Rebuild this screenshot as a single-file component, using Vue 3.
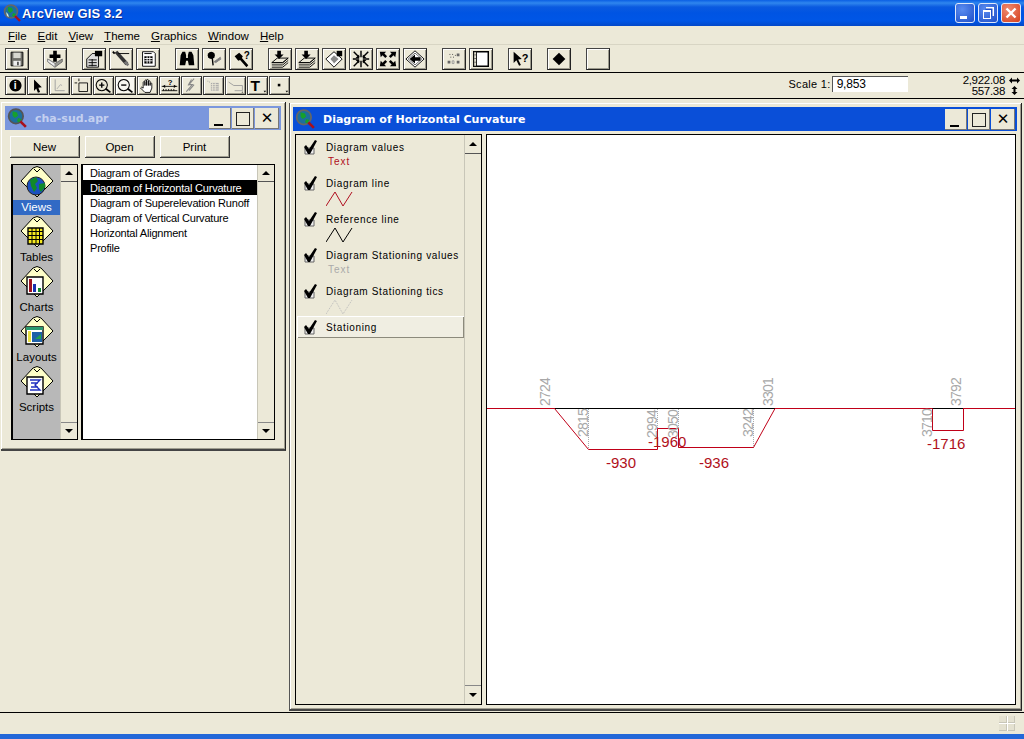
<template>
  <div class="app">
    <!-- main title bar -->
    <header class="titlebar">
      <svg class="logo" viewBox="0 0 18 18">
        <circle cx="8" cy="7.5" r="6.5" fill="#1d6f9c" stroke="#666" stroke-width="1.6" />
        <path d="M5 3l4 1 1 3-3 2-2-2zM10 9l3 1-2 3-2-1z" fill="#16a02c" />
        <path d="M3 8l2 2 1 3-2-1z" fill="#d8e8d8" />
        <path d="M12 12l5 5" stroke="#a8101c" stroke-width="2.4" />
      </svg>
      <span class="app-title">ArcView GIS 3.2</span>
      <div class="xp-buttons">
        <span class="xp-btn"><i class="xp-min"></i></span>
        <span class="xp-btn"><i class="xp-restore"></i></span>
        <span class="xp-btn xp-close">
          <svg viewBox="0 0 20 20"><path d="M5.500 5.500l9 9M14.500 5.500l-9 9" stroke="#fff" stroke-width="2.400" /></svg>
        </span>
      </div>
    </header>

    <!-- menu -->
    <nav class="menubar">
      <span v-for="m in menus" :key="m.rest" class="menu-item"><u>{{ m.key }}</u>{{ m.rest }}</span>
    </nav>

    <!-- toolbars -->
    <div class="toolbar toolbar-main">
      <button
        v-for="t in mainTools"
        :key="t.id"
        class="tool"
        :class="[t.id, { sep: t.sep }]"
      >
        <svg viewBox="0 0 24 22">
          <template v-for="(s, i) in t.shapes" :key="i">
            <text v-if="s.t" :x="s.x" :y="s.y" :font-size="s.size" class="icon-text">{{ s.t }}</text>
            <path v-else :d="s.d" :fill="s.fill" :stroke="s.stroke" :stroke-width="s.sw" />
          </template>
        </svg>
      </button>
    </div>

    <div class="toolbar toolbar-small">
      <button v-for="t in smallTools" :key="t.id" class="tool tool-small" :class="t.id">
        <svg viewBox="0 0 22 18">
          <template v-for="(s, i) in t.shapes" :key="i">
            <text
              v-if="s.t"
              :x="s.x"
              :y="s.y"
              :font-size="s.size"
              :font-family="s.serif ? 'Liberation Serif, serif' : null"
              class="icon-text"
            >{{ s.t }}</text>
            <path v-else :d="s.d" :fill="s.fill" :stroke="s.stroke" :stroke-width="s.sw" />
          </template>
        </svg>
      </button>
      <div class="scale">
        <span>Scale 1:</span>
        <span class="scale-input">9,853</span>
      </div>
      <div class="coords">
        <span>2,922.08</span>
        <svg class="coord-arrow" viewBox="0 0 11 9"><path d="M0 4.500l3-3v2h5v-2l3 3-3 3v-2H3v2z" /></svg>
        <span>557.38</span>
        <svg class="coord-arrow" viewBox="0 0 11 9"><path d="M5.500 0l3 3h-2v3h2l-3 3-3-3h2V3h-2z" /></svg>
      </div>
    </div>

    <main class="desktop">
      <!-- project window -->
      <section class="window project">
        <div class="win-title inactive">
          <svg class="logo win-logo" viewBox="0 0 18 18">
            <circle cx="8" cy="7.5" r="6.5" fill="#1d6f9c" stroke="#555" stroke-width="1.6" />
            <path d="M5 3l4 1 1 3-3 2-2-2zM10 9l3 1-2 3-2-1z" fill="#16a02c" />
            <path d="M12 12l5 5" stroke="#a8101c" stroke-width="2.400" />
          </svg>
          <span class="win-name">cha-sud.apr</span>
          <div class="win-buttons">
            <span class="win-btn"><i class="w-min"></i></span>
            <span class="win-btn"><i class="w-max"></i></span>
            <span class="win-btn w-close">✕</span>
          </div>
        </div>

        <div class="project-actions">
          <button class="action">New</button>
          <button class="action">Open</button>
          <button class="action">Print</button>
        </div>

        <div class="project-body">
          <div class="panel types">
            <div class="type-list">
              <div v-for="d in docTypes" :key="d.name" class="type-item">
                <svg class="type-icon" viewBox="0 0 34 34">
                  <path d="M1 16L13 3q4-3 8 0l12 13-16 16z" fill="#ffffc8" stroke="#000" />
                  <path d="M14 4l3 3 3-3" fill="none" stroke="#000" />
                  <template v-if="d.name === 'Views'">
                    <circle cx="16" cy="21" r="9" fill="#1a50c0" stroke="#222" />
                    <path d="M10 15l6-3 2 4-3 3 2 4-3 4-3-6zM19 19l6-1v4l-4 5-2-3z" fill="#108a2a" />
                  </template>
                  <template v-else-if="d.name === 'Tables'">
                    <path d="M8 13h15v16H8z" fill="#f5e820" stroke="#000" stroke-width="1.400" />
                    <path d="M8 16.500h15M8 20.500h15M8 24.500h15M12 13v16M16 13v16M19.500 13v16" stroke="#000" stroke-width="1" />
                  </template>
                  <template v-else-if="d.name === 'Charts'">
                    <path d="M7 12h16v17H7z" fill="#fff" stroke="#000" stroke-width="1.400" />
                    <path d="M9 14h3v13H9z" fill="#a01020" />
                    <path d="M13 19h3v8h-3z" fill="#1a30b0" />
                    <path d="M18 23h3v4h-3z" fill="#128a30" />
                  </template>
                  <template v-else-if="d.name === 'Layouts'">
                    <path d="M6 12h17v17H6z" fill="#fff" stroke="#000" stroke-width="1.400" />
                    <path d="M6 12h17v3H6z" fill="#2a9a70" />
                    <path d="M8 16h3v11H8z" fill="#e8e040" />
                    <path d="M12 17h10v10H12z" fill="#1c60a8" />
                    <path d="M15 24l6-5v5z" fill="#20a050" />
                  </template>
                  <template v-else>
                    <path d="M7 12h16v17H7z" fill="#fff" stroke="#000" stroke-width="1.400" />
                    <path d="M10 15h10l-5 5 5 5H10M11 18h7M11 22h7" fill="none" stroke="#2030c0" stroke-width="1.400" />
                  </template>
                </svg>
                <div class="type-label" :class="{ current: d.name === 'Views' }">{{ d.name }}</div>
              </div>
            </div>
            <div class="vscroll">
              <span class="sb-btn"><i class="up"></i></span>
              <span class="sb-track"></span>
              <span class="sb-btn"><i class="down"></i></span>
            </div>
          </div>

          <div class="panel docs">
            <ul class="doc-list">
              <li
                v-for="name in documents"
                :key="name"
                :class="{ selected: name === 'Diagram of Horizontal Curvature' }"
              >{{ name }}</li>
            </ul>
            <div class="vscroll">
              <span class="sb-btn"><i class="up"></i></span>
              <span class="sb-track"></span>
              <span class="sb-btn"><i class="down"></i></span>
            </div>
          </div>
        </div>
      </section>

      <!-- view window -->
      <section class="window view">
        <div class="win-title">
          <svg class="logo win-logo" viewBox="0 0 18 18">
            <circle cx="8" cy="7.500" r="6.500" fill="#1d6f9c" stroke="#666" stroke-width="1.600" />
            <path d="M5 3l4 1 1 3-3 2-2-2zM10 9l3 1-2 3-2-1z" fill="#16a02c" />
            <path d="M12 12l5 5" stroke="#a8101c" stroke-width="2.400" />
          </svg>
          <span class="win-name">Diagram of Horizontal Curvature</span>
          <div class="win-buttons">
            <span class="win-btn"><i class="w-min"></i></span>
            <span class="win-btn"><i class="w-max"></i></span>
            <span class="win-btn w-close">✕</span>
          </div>
        </div>

        <div class="view-body">
          <aside class="legend-panel">
            <div class="legend-rows">
              <div
                v-for="row in legend"
                :key="row.label"
                class="legend-row"
                :class="{ active: row.active }"
              >
                <svg class="check" viewBox="0 0 16 16">
                  <path d="M3 9h9v6H3z" fill="#eee" stroke="#666" />
                  <path d="M2 8l2-2 3 4 6-9 2 1-7 13H6z" fill="#000" />
                </svg>
                <div class="legend-text">
                  <div class="legend-label">{{ row.label }}</div>
                  <div v-if="row.sample" class="legend-sample" :style="{ color: row.color }">{{ row.sample }}</div>
                  <svg v-else-if="row.color" class="legend-line" viewBox="0 0 28 16">
                    <path
                      d="M0 15L9 1l8 14L26 1"
                      fill="none"
                      :stroke="row.color"
                      :stroke-dasharray="row.dotted ? '1 1' : null"
                    />
                  </svg>
                </div>
              </div>
            </div>
            <div class="vscroll">
              <span class="sb-btn tall"><i class="up"></i></span>
              <span class="sb-track"></span>
              <span class="sb-btn tall"><i class="down"></i></span>
            </div>
          </aside>

          <!-- diagram canvas uses the page's own pixel coordinates -->
          <div class="canvas">
            <svg class="diagram" viewBox="487 135 528 569">
              <path d="M487 408.500H1015" stroke="#c00018" fill="none" />
              <path d="M555 408.500H775M932 408.500H963" stroke="#000" fill="none" />
              <path
                d="M588.500 409V449M657.500 409V449M678.500 409V448M753.500 409V448"
                stroke="#aaa"
                stroke-dasharray="1 1"
                fill="none"
              />
              <path
                d="M554.500 408.500L588.500 449.500H657.500V428.500H678.500V447.500H753.500L775 408.500"
                stroke="#c00018"
                fill="none"
              />
              <path d="M932.500 408.500V430.500H963.500V408.500" stroke="#c00018" fill="none" />
              <text
                v-for="s in stations"
                :key="s.text"
                :x="s.x"
                :y="s.y"
                :transform="`rotate(-90 ${s.x} ${s.y})`"
                class="station"
              >{{ s.text }}</text>
              <text v-for="v in values" :key="v.text" :x="v.x" :y="v.y" class="value">{{ v.text }}</text>
            </svg>
          </div>
        </div>
      </section>
    </main>

    <footer class="statusbar">
      <span class="grip"><i></i><i></i><i></i><i></i></span>
    </footer>
    <div class="taskbar"></div>
  </div>
</template>

<script setup>
// shorthand for the icon shapes
const p = (d, fill = '#000', stroke = 'none', sw = 1) => ({ d, fill, stroke, sw })
const line = (d, stroke = '#000', sw = 1) => ({ d, fill: 'none', stroke, sw })
const txt = (t, x, y, size, serif = false) => ({ t, x, y, size, serif })

const menus = [
  { key: 'F', rest: 'ile' },
  { key: 'E', rest: 'dit' },
  { key: 'V', rest: 'iew' },
  { key: 'T', rest: 'heme' },
  { key: 'G', rest: 'raphics' },
  { key: 'W', rest: 'indow' },
  { key: 'H', rest: 'elp' },
]

const stack = [
  p('M3 15l6-5h12l-6 5z', '#ece9d8', '#000'),
  line('M3 15h12l6-5M3 17.500h12l6-5M3 20h12l6-5'),
  p('M9 2h4v4h3l-5 5-5-5h3z'),
]

const mainTools = [
  { id: 'save', shapes: [p('M5.500 3.500h13v15h-13z', '#6e6e68', '#000'), p('M8 4h8v6H8z', '#d8d8d0'), p('M8 13h8v5.500H8z', '#eee'), p('M12 14h2v4h-2z', '#555')] },
  { id: 'add', sep: true, shapes: [p('M4 11l8 5 8-5v3l-8 6-8-6z', '#9a9a94', '#666'), p('M4 11l8 5v4l-8-6z', '#eee', '#888'), p('M10 2h4v4h4v4h-4v4h-4v-4H6V6h4z')] },
  { id: 'props', sep: true, shapes: [p('M4 11l6-6h7v15H4z', '#ddd', '#000'), line('M6 12h9M6 15h9M6 18h9M10 11v8'), p('M13 2h8v6h-8z')] },
  { id: 'edit', shapes: [line('M3 3l2 2', '#000', 2), p('M5 4l3-2 12 13-3 3z', '#333'), p('M15 15l3-2 3 4-2 2z', '#777'), line('M9 5h12')] },
  { id: 'table', shapes: [p('M6 3h12l2 2v14H6z', '#fff', '#000'), p('M8 8h9v8H8z', '#000'), line('M8 10.500h9M8 13h9M11 8v8M14 8v8', '#fff'), line('M8 5h8')] },
  { id: 'find', sep: true, shapes: [p('M5 7l2-4h3l1 4v3h2V7l1-4h3l2 4 1 11h-6l-1-5h-2l-1 5H4z')] },
  { id: 'locate', shapes: [p('M9 3a4 4 0 1 1-.01 0z'), line('M10 9l1 9', '#000', 1.500), { d: 'M12 14l7-5v2l-5 4zM15 14l5-3', fill: '#777', stroke: '#888', sw: 1 }] },
  { id: 'query', shapes: [p('M5 8l5-4 4 4-1 2 7 8-2 2-7-8-2 1z'), txt('?', 15, 11, 11)] },
  { id: 'load1', sep: true, shapes: stack },
  { id: 'load2', shapes: stack },
  { id: 'legendtool', shapes: [p('M12 3l9 8-9 9-9-9z', '#fff', '#000'), p('M12 7l5 4-5 5-4-5z', '#888'), p('M15 2h6v6h-6z'), line('M9 13l2 2', '#fff')] },
  { id: 'shrink', shapes: [line('M4 3l6 6M20 3l-6 6M4 19l6-6M20 19l-6-6M12 2v7M12 20v-7M3 11h7M21 11h-7', '#000', 1.600), p('M10 10H6l4-4zM14 10h4l-4-4zM10 12H6l4 4zM14 12h4l-4 4z')] },
  { id: 'grow', shapes: [p('M3 3h7L8 5l3 3-2 2-3-3-2 2zM21 3h-7l2 2-3 3 2 2 3-3 2 2zM3 19h7l-2-2 3-3-2-2-3 3-2-2zM21 19h-7l2-2-3-3 2-2 3 3 2-2z')] },
  { id: 'back', shapes: [p('M12 2l10 9-10 9L2 11z', '#fff', '#000'), line('M12 4.500L19.500 11 12 17.500 4.500 11z', '#666'), p('M6 11l6-5v3h6v4h-6v3z')] },
  { id: 'select', sep: true, shapes: [line('M7 6h1M10 6h1M13 7h1M8 9h1M11 9h1', '#444'), p('M15 5h3v3h-3zM5 13h3v3H5zM15 13h3v3h-3z', '#666'), line('M10 13h2v3h-2z', '#999')] },
  { id: 'frame', shapes: [p('M4 3h16v16H4z', '#fff', '#000', 1.600), p('M4 3h3v16H4z', '#ece9d8', '#000'), line('M5.500 6v1M5.500 10v1M5.500 14v1')] },
  { id: 'help', sep: true, shapes: [p('M5 3l9 8-4 .5 3 6-2 1-3-6-3 3z'), txt('?', 14, 14, 12)] },
  { id: 'point', sep: true, shapes: [p('M12 4l7 7-7 7-7-7z')] },
  { id: 'blank', sep: true, shapes: [] },
]

const smallTools = [
  { id: 'info', shapes: [p('M11 2a7 7 0 1 1-.01 0z'), txt('i', 9, 13.500, 12, true)] },
  { id: 'pointer', shapes: [p('M7 2l9 9-4 .5 2 5-2.500 1-2-5-2.500 3z')] },
  { id: 'vertex', shapes: [line('M6 2v13h11', '#999'), line('M8 13l4-5 2 1', '#aaa')] },
  { id: 'rect', shapes: [line('M8 6h10v10H8zM6 6H3M8 4V1', '#000')] },
  { id: 'zoomin', shapes: [p('M9 2a6.500 6.500 0 1 1-.01 0z', 'none', '#000', 1.200), line('M6 8.500h6M9 5.500v6', '#000', 1.600), line('M14 13l5 4', '#000', 2)] },
  { id: 'zoomout', shapes: [p('M9 2a6.500 6.500 0 1 1-.01 0z', 'none', '#000', 1.200), line('M6 8.500h6', '#000', 1.600), line('M14 13l5 4', '#000', 2)] },
  { id: 'hand', shapes: [p('M6 10V5.500a1 1 0 0 1 2 0V9 3.500a1 1 0 0 1 2 0V9 3a1 1 0 0 1 2 0v6V4.500a1 1 0 0 1 2 0V9 7a1 1 0 0 1 2 0v5l-2 5H8l-5-5 1-1 2 1z', '#fff', '#000')] },
  { id: 'measure', shapes: [txt('?', 9, 8, 9), line('M2 10h18M2 15h18'), p('M3 10l3-2v4zM19 10l-3-2v4z'), line('M4 13v2M7 13v2M10 13v2M13 13v2M16 13v2')] },
  { id: 'bolt', shapes: [line('M14 1L8 8h4l-7 8M11 2L7 9M14 8l-6 7', '#888', 1.200)] },
  { id: 'hatch', shapes: [line('M4 4h1M6 5h1', '#999'), p('M8 6h9v9H8z', '#aaa'), line('M8 8h9M8 10.500h9M8 13h9M10 6v9M13 6v9', '#ece9d8')] },
  { id: 'poly', shapes: [line('M3 5l6 4h10v6h-9', '#999'), p('M19 16l1 1h-2z')] },
  { id: 'bigt', shapes: [txt('T', 3, 15, 18, true), p('M18 15h3l-1.500 2z')] },
  { id: 'dot', shapes: [p('M9 7h3v3H9z'), p('M18 15h3l-1.500 2z')] },
]

const docTypes = [
  { name: 'Views' },
  { name: 'Tables' },
  { name: 'Charts' },
  { name: 'Layouts' },
  { name: 'Scripts' },
]

const documents = [
  'Diagram of Grades',
  'Diagram of Horizontal Curvature',
  'Diagram of Superelevation Runoff',
  'Diagram of Vertical Curvature',
  'Horizontal Alignment',
  'Profile',
]

const legend = [
  { label: 'Diagram values', sample: 'Text', color: '#b01020' },
  { label: 'Diagram line', color: '#b01020' },
  { label: 'Reference line', color: '#000' },
  { label: 'Diagram Stationing values', sample: 'Text', color: '#aaa' },
  { label: 'Diagram Stationing tics', color: '#bbb', dotted: true },
  { label: 'Stationing', active: true },
]

const stations = [
  { text: '2724', x: 550, y: 406 },
  { text: '2815', x: 588, y: 437 },
  { text: '2994', x: 657, y: 438 },
  { text: '3050', x: 678, y: 438 },
  { text: '3242', x: 753, y: 437 },
  { text: '3301', x: 773, y: 406 },
  { text: '3710', x: 932, y: 437 },
  { text: '3792', x: 961, y: 406 },
]

const values = [
  { text: '-1960', x: 648, y: 447 },
  { text: '-930', x: 606, y: 468 },
  { text: '-936', x: 699, y: 468 },
  { text: '-1716', x: 927, y: 449 },
]
</script>

<style scoped>
.app {
  width: 1024px;
  height: 739px;
  display: flex;
  flex-direction: column;
  overflow: hidden;
  background: #ece9d8;
  font-family: "Liberation Sans", Arial, sans-serif;
  font-size: 11px;
  color: #000;
}

/* main title bar */
.titlebar {
  height: 26px;
  flex: none;
  display: flex;
  align-items: center;
  padding-left: 3px;
  gap: 1px;
  background: linear-gradient(#0a5fe4 0, #2f86ee 3px, #0a5ae0 7px, #0054e3 50%, #0056e6 80%, #0348c8 100%);
}
.logo {
  width: 18px;
  height: 18px;
  flex: none;
}
.win-logo {
  width: 20px;
  height: 20px;
}
.app-title {
  font: bold 13px "Liberation Sans", sans-serif;
  letter-spacing: 0.1px;
  color: #fff;
  text-shadow: 1px 1px 0 #0a2a90;
}
.xp-buttons {
  margin-left: auto;
  margin-right: 3px;
  display: flex;
  gap: 3px;
}
.xp-btn {
  width: 20px;
  height: 20px;
  box-sizing: border-box;
  border: 1px solid #dfe8fa;
  border-radius: 3px;
  background: radial-gradient(circle at 35% 30%, #5a8cf0, #1f4fc8);
  position: relative;
  display: block;
}
.xp-close {
  background: radial-gradient(circle at 35% 30%, #ee8a70, #d6401c);
}
.xp-close svg {
  position: absolute;
  inset: -1px;
}
.xp-min {
  position: absolute;
  left: 4px;
  bottom: 3px;
  width: 7px;
  height: 3px;
  background: #fff;
}
.xp-restore {
  position: absolute;
  left: 4px;
  top: 6px;
  width: 6px;
  height: 6px;
  border: 1px solid #fff;
  border-top-width: 2px;
  box-shadow: 2px -2px 0 -0.5px #1f4fc8, 3px -3px 0 0 #fff;
}

/* menu */
.menubar {
  height: 19px;
  flex: none;
  box-sizing: border-box;
  display: flex;
  align-items: center;
  gap: 11px;
  padding: 2px 0 0 8px;
  border-bottom: 1px solid #d8d5c4;
  font-size: 11.500px;
}

/* toolbars */
.toolbar {
  flex: none;
  display: flex;
  box-sizing: border-box;
  border-bottom: 1px solid #000;
  padding-left: 5px;
}
.toolbar-main {
  height: 28px;
  padding-top: 3px;
  gap: 3px;
}
.toolbar-small {
  height: 26px;
  padding-top: 3px;
  gap: 1px;
  align-items: flex-start;
}
.tool {
  width: 24px;
  height: 22px;
  padding: 0;
  box-sizing: border-box;
  background: #ece9d8;
  border: 1px solid #444;
  border-right-color: #222;
  border-bottom-color: #222;
  box-shadow: inset 1px 1px 0 #fff, inset -1px -1px 0 #9c9a8c;
  display: block;
}
.tool svg {
  width: 100%;
  height: 100%;
  display: block;
}
.tool.sep {
  margin-left: 12px;
}
.tool.save {
  margin-right: -1px;
}
.tool-small {
  width: 21px;
  height: 19px;
}
.zoomout {
  background: #f8f7f0;
}
.icon-text {
  font-family: "Liberation Sans", sans-serif;
  font-weight: bold;
}
.info .icon-text {
  fill: #fff;
}

/* scale and cursor read-out */
.scale {
  margin-left: auto;
  display: flex;
  align-items: center;
  gap: 1px;
  height: 16px;
  letter-spacing: 0.300px;
}
.scale-input {
  width: 76px;
  height: 16px;
  box-sizing: border-box;
  padding-left: 4px;
  background: #fff;
  border-top: 1px solid #555;
  border-left: 1px solid #555;
  line-height: 15px;
  letter-spacing: -0.200px;
  font-size: 12px;
}
.coords {
  margin-left: 54px;
  margin-right: 4px;
  margin-top: -1px;
  display: grid;
  grid-template-columns: auto 11px;
  column-gap: 4px;
  align-items: center;
  justify-items: end;
  line-height: 10.500px;
  font-size: 11.500px;
  letter-spacing: -0.300px;
}
.coord-arrow {
  width: 11px;
  height: 9px;
}

/* mdi area */
.desktop {
  flex: 1;
  position: relative;
}
.window {
  position: absolute;
  box-sizing: border-box;
  background: #ece9d8;
  border-right: 1px solid #222;
  border-bottom: 2px solid #444;
  box-shadow: inset 1px 1px 0 #fff, inset -1px -1px 0 #a09e90;
  padding: 4px;
  display: flex;
  flex-direction: column;
}
.project {
  left: 1px;
  top: 3px;
  width: 285px;
  height: 349px;
}
.view {
  left: 289px;
  top: 4px;
  width: 733px;
  height: 608px;
  border-left: 1px solid #555;
  padding-left: 3px;
}
.win-title {
  height: 24px;
  flex: none;
  display: flex;
  align-items: center;
  gap: 5px;
  padding-left: 2px;
  background: #0a4fd8;
  color: #fff;
}
.project .win-title {
  margin-bottom: 6px;
}
.view .win-title {
  margin-bottom: 3px;
}
.win-title.inactive {
  background: #7b97dd;
  color: #c4d0f0;
}
.win-name {
  margin-left: 3px;
  font: bold 11px "DejaVu Sans", sans-serif;
}
.win-buttons {
  margin-left: auto;
  margin-right: 2px;
  display: flex;
  gap: 1px;
}
.win-btn {
  width: 22px;
  height: 21px;
  box-sizing: border-box;
  background: #ece9d8;
  box-shadow: inset -1px -1px 0 #777;
  position: relative;
  display: block;
  color: #000;
}
.w-min {
  position: absolute;
  left: 5px;
  bottom: 3px;
  width: 9px;
  height: 2px;
  background: #000;
}
.w-max {
  position: absolute;
  left: 4px;
  top: 4px;
  width: 12px;
  height: 12px;
  border: 1px solid #222;
}
.w-close {
  width: 24px;
  text-align: center;
  font: bold 15px/21px "DejaVu Sans", sans-serif;
}

/* project window */
.project-actions {
  display: flex;
  gap: 5px;
  padding-left: 5px;
  margin-bottom: 6px;
}
.action {
  width: 70px;
  height: 22px;
  padding: 0;
  background: #ece9d8;
  border: 0;
  border-right: 1px solid #333;
  border-bottom: 1px solid #333;
  box-shadow: inset 1px 1px 0 #fff, inset -1px -1px 0 #a09e90;
  font: 11.500px "Liberation Sans", sans-serif;
  color: #000;
}
.project-body {
  display: flex;
  gap: 3px;
  height: 276px;
  padding-left: 6px;
}
.panel {
  display: flex;
  box-sizing: border-box;
  border: 1px solid #000;
  border-left-width: 2px;
  background: #fff;
}
.types {
  width: 67px;
  background: #b8b8b8;
}
.docs {
  width: 194px;
}
.type-list {
  flex: 1;
  min-width: 0;
}
.type-item {
  height: 50px;
  text-align: center;
}
.type-icon {
  width: 34px;
  height: 34px;
  margin: 0 auto 1px;
  display: block;
}
.type-label {
  height: 15px;
  line-height: 15px;
  font-size: 11.500px;
}
.type-label.current {
  background: #316ac5;
  color: #fff;
}
.doc-list {
  flex: 1;
  min-width: 0;
  margin: 0;
  padding: 0;
  list-style: none;
}
.doc-list li {
  height: 15px;
  line-height: 16px;
  padding-left: 7px;
  white-space: nowrap;
  font-size: 11px;
  letter-spacing: -0.200px;
}
.doc-list li.selected {
  background: #000;
  color: #fff;
}

/* scroll bars */
.vscroll {
  width: 16px;
  flex: none;
  display: flex;
  flex-direction: column;
  background: #ece9d8;
  border-left: 1px solid #c8c6b8;
}
.sb-btn {
  height: 16px;
  flex: none;
  display: flex;
  align-items: center;
  justify-content: center;
  background: #ece9d8;
  border-bottom: 1px solid #555;
}
.sb-btn:last-child {
  border-bottom: 0;
  border-top: 1px solid #888;
}
.sb-btn.tall {
  height: 18px;
}
.sb-track {
  flex: 1;
}
.sb-btn i {
  width: 0;
  height: 0;
  border-left: 4px solid transparent;
  border-right: 4px solid transparent;
}
.sb-btn .up {
  border-bottom: 4px solid #000;
}
.sb-btn .down {
  border-top: 4px solid #000;
}

/* view window */
.view-body {
  flex: 1;
  display: flex;
  gap: 4px;
  padding-left: 2px;
  margin-right: 1px;
  min-height: 0;
}
.legend-panel {
  width: 187px;
  flex: none;
  box-sizing: border-box;
  border: 1px solid #000;
  display: flex;
}
.legend-rows {
  flex: 1;
  padding-top: 1px;
  min-width: 0;
}
.legend-row {
  height: 36px;
  display: flex;
  padding-left: 6px;
  box-sizing: border-box;
}
.legend-row.active {
  height: 22px;
  margin-left: 1px;
  padding-left: 5px;
  align-items: center;
  box-shadow: inset 1px 1px 0 #fff, inset -1px -1px 0 #8c8a7c;
  background: #f0eee2;
}
.check {
  width: 16px;
  height: 16px;
  flex: none;
  margin-top: 3px;
  margin-right: 8px;
}
.legend-row.active .check {
  margin-top: 0;
}
.legend-text {
  padding-top: 5px;
  font-size: 10px;
  letter-spacing: 0.650px;
}
.legend-row.active .legend-text {
  padding-top: 1px;
}
.legend-label {
  height: 14px;
  line-height: 13px;
  white-space: nowrap;
}
.legend-sample {
  height: 14px;
  line-height: 13px;
  padding-left: 2px;
  letter-spacing: 1px;
}
.legend-line {
  width: 28px;
  height: 16px;
  display: block;
}
.canvas {
  flex: 1;
  box-sizing: border-box;
  background: #fff;
  border: 1px solid #000;
  min-width: 0;
}
.diagram {
  width: 100%;
  height: 100%;
  display: block;
}
.station {
  font-size: 14px;
  letter-spacing: -0.800px;
  fill: #a8a8a8;
}
.value {
  font-size: 15px;
  fill: #b01020;
}

/* status bar */
.statusbar {
  height: 22px;
  flex: none;
  box-sizing: border-box;
  border-top: 1px solid #000;
  display: flex;
  justify-content: flex-end;
  align-items: center;
  padding-right: 9px;
}
.grip {
  width: 16px;
  height: 15px;
  display: grid;
  grid-template-columns: 1fr 1fr;
  gap: 1px;
  background: #fff;
}
.grip i {
  background: #e4e1d0;
  border-right: 1px solid #c8c6b8;
  border-bottom: 1px solid #c8c6b8;
}
.taskbar {
  height: 5px;
  flex: none;
  background: #2267d8;
}
</style>

<style>
html,
body {
  margin: 0;
  background: #ece9d8;
}
</style>
